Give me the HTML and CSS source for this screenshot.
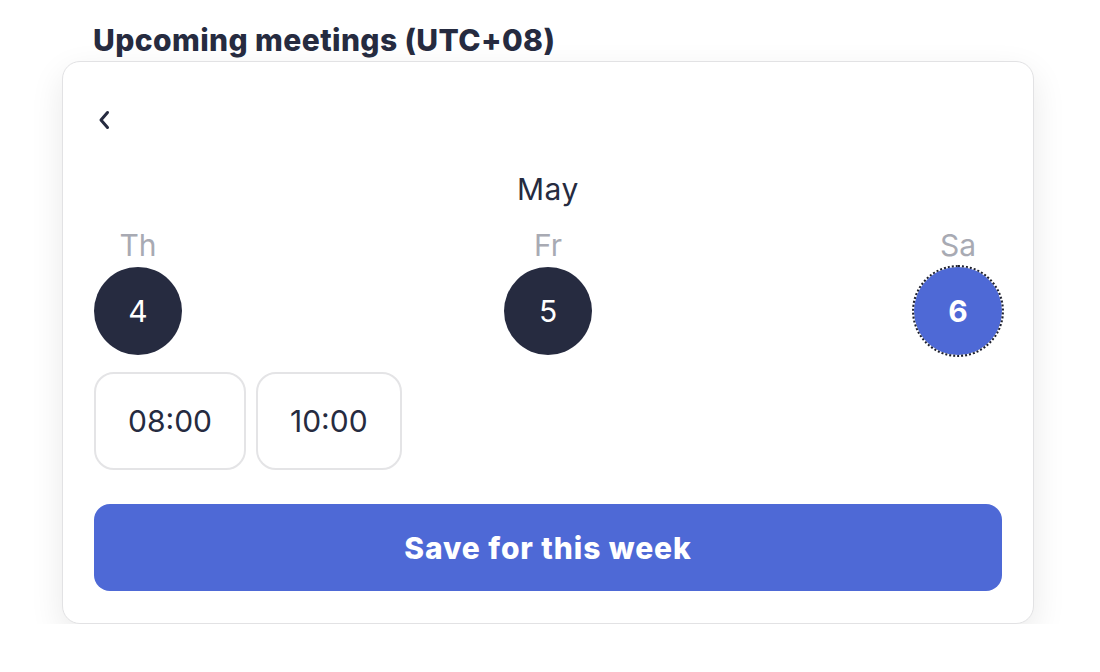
FILE: index.html
```html
<!DOCTYPE html>
<html lang="en">
<head>
<meta charset="utf-8">
<title>Upcoming meetings</title>
<link rel="stylesheet" href="styles.css">
</head>
<body>
<main class="page">
  <h1 class="title">Upcoming meetings (UTC+08)</h1>
  <section class="card">
    <div class="back-row">
      <button class="back" aria-label="Previous week">
        <svg width="24" height="24" viewBox="0 0 24 24" fill="none" stroke="#262b40" stroke-width="3" stroke-linecap="round" stroke-linejoin="round"><path d="M14.5 4.5 L8 12 L14.5 19.5"/></svg>
      </button>
    </div>
    <div class="month">May</div>
    <div class="days">
      <div class="day">
        <span class="day-label">Th</span>
        <span class="day-num">4</span>
      </div>
      <div class="day">
        <span class="day-label">Fr</span>
        <span class="day-num">5</span>
      </div>
      <div class="day">
        <span class="day-label">Sa</span>
        <span class="day-num selected">6</span>
      </div>
    </div>
    <div class="times">
      <button class="time">08:00</button>
      <button class="time">10:00</button>
    </div>
    <button class="save">Save for this week</button>
  </section>
</main>
</body>
</html>
```

FILE: styles.css
```css
* { box-sizing: border-box; }

html, body {
  margin: 0;
  padding: 0;
  background: #ffffff;
}

body {
  font-family: Inter, "Noto Sans", sans-serif;
  color: #262b40;
}

.page {
  width: 972px;
  margin-left: 62px;
  padding-top: 22px;
}

.title {
  margin: 0 0 3px 31px;
  font-size: 30px;
  line-height: 36px;
  font-weight: 800;
  letter-spacing: 0.4px;
  color: #262b40;
}

.card {
  background: #fff;
  border: 1px solid #e2e2e4;
  border-radius: 18px;
  box-shadow: 0 12px 34px rgba(0, 0, 0, 0.09);
  padding: 31px 31px 32px;
}

.back-row {
  height: 54px;
  display: flex;
  align-items: center;
}

.back {
  border: 0;
  background: none;
  padding: 0;
  margin-left: -1px;
  width: 24px;
  height: 24px;
  display: flex;
  align-items: center;
  justify-content: center;
  cursor: pointer;
}

.month {
  margin-top: 24px;
  text-align: center;
  font-size: 30px;
  line-height: 36px;
  font-weight: 400;
  letter-spacing: 0.6px;
}

.days {
  margin-top: 20px;
  display: flex;
  justify-content: space-between;
}

.day {
  display: flex;
  flex-direction: column;
  align-items: center;
  width: 88px;
}

.day-label {
  font-size: 30px;
  line-height: 36px;
  color: #a8aab3;
}

.day-num {
  margin-top: 4px;
  width: 88px;
  height: 88px;
  border-radius: 50%;
  background: #262b40;
  color: #fff;
  font-size: 30px;
  display: flex;
  align-items: center;
  justify-content: center;
}

.day-num.selected {
  background: #4e69d6;
  font-weight: 700;
  outline: 2px dotted #1c1f2e;
  outline-offset: 0;
}

.times {
  margin-top: 17px;
  display: flex;
  gap: 10px;
}

.time {
  font-family: inherit;
  font-size: 30px;
  line-height: 36px;
  color: #262b40;
  background: #fff;
  border: 2px solid #e4e4e6;
  border-radius: 20px;
  padding: 29px 32px;
}

.save {
  display: block;
  width: 100%;
  margin-top: 34px;
  height: 87px;
  border: 0;
  border-radius: 16px;
  background: #4e69d6;
  color: #fff;
  font-family: inherit;
  font-size: 30px;
  font-weight: 800;
  letter-spacing: 0.9px;
}
```
